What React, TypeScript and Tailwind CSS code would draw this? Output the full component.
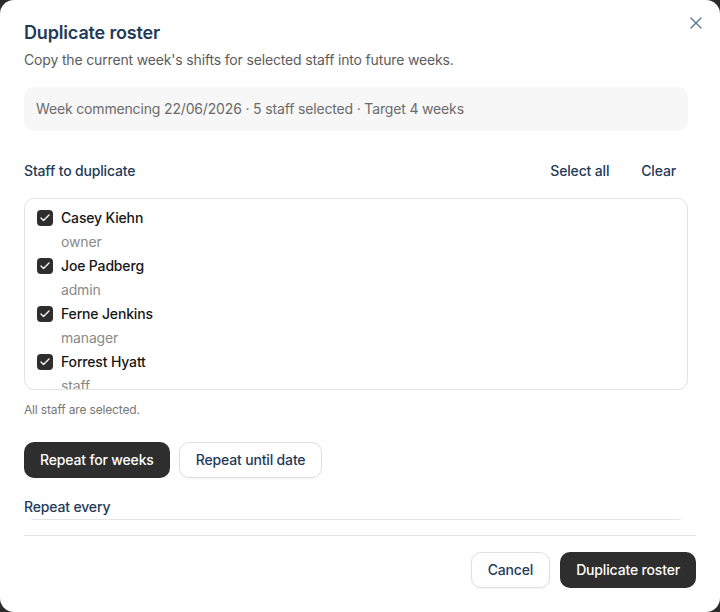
import React from "react";
import { X, Check } from "lucide-react";

const staff = [
  { name: "Casey Kiehn", role: "owner" },
  { name: "Joe Padberg", role: "admin" },
  { name: "Ferne Jenkins", role: "manager" },
  { name: "Forrest Hyatt", role: "staff" },
  { name: "Lela Schmitt", role: "staff" },
];

export default function App() {
  return (
    <div className="w-[720px] h-[612px] bg-[#2b2b2b] font-['Inter',sans-serif] tracking-[-0.01em]">
      <div className="relative flex flex-col h-full bg-white rounded-[14px] overflow-hidden">
        <button className="absolute right-[14px] top-[13px] text-[#5b7a96]">
          <X size={20} strokeWidth={1.6} />
        </button>

        <div className="flex-1 min-h-0 overflow-hidden pl-6 pr-8 pt-[19px]">
          <h2 className="text-lg leading-7 font-semibold text-[#1f3b58]">Duplicate roster</h2>
          <p className="mt-[3px] text-sm leading-5 text-[#5c5c5c]">
            Copy the current week's shifts for selected staff into future weeks.
          </p>

          <div className="mt-[17px] rounded-[10px] bg-[#f7f7f7] px-3 py-3 text-sm leading-5 text-[#6b6b6b]">
            Week commencing 22/06/2026 · 5 staff selected · Target 4 weeks
          </div>

          <div className="mt-[22px] flex items-center justify-between h-9">
            <span className="text-sm font-medium text-[#1f3b58]">Staff to duplicate</span>
            <div className="flex gap-2 text-sm font-medium text-[#1f3b58]">
              <button className="h-9 px-3">Select all</button>
              <button className="h-9 px-3">Clear</button>
            </div>
          </div>

          <div className="mt-[9px] h-[192px] overflow-hidden rounded-[10px] border border-[#e3e3e3] px-3 pt-[7px]">
            {staff.map((s) => (
              <div key={s.name} className="flex gap-2">
                <span className="mt-1 flex h-4 w-4 shrink-0 items-center justify-center rounded-[4px] bg-[#2e2e2e] text-white">
                  <Check size={12} strokeWidth={2.5} />
                </span>
                <div className="flex flex-col">
                  <span className="text-sm leading-6 font-medium text-[#171717]">{s.name}</span>
                  <span className="text-sm leading-6 text-[#8a8a8a]">{s.role}</span>
                </div>
              </div>
            ))}
          </div>

          <p className="mt-3 text-xs leading-4 text-[#777]">All staff are selected.</p>

          <div className="mt-6 flex gap-[9px]">
            <button className="h-9 rounded-[10px] bg-[#2e2e2e] px-4 text-sm font-medium text-white">
              Repeat for weeks
            </button>
            <button className="h-9 rounded-[10px] border border-[#e0e0e0] bg-white px-4 text-sm font-medium text-[#1f3b58] shadow-xs">
              Repeat until date
            </button>
          </div>

          <p className="mt-[19px] text-sm leading-5 font-medium text-[#1f3b58]">Repeat every</p>
          <div className="mt-0.5 h-9 rounded-[10px] border border-[#e3e3e3]" />
        </div>

        <div className="mx-6 mt-[15px] flex justify-end gap-2.5 border-t border-[#e3e3e3] pt-4 pb-6">
          <button className="h-9 rounded-[10px] border border-[#e0e0e0] bg-white px-4 text-sm font-medium text-[#1f3b58] shadow-xs">
            Cancel
          </button>
          <button className="h-9 rounded-[10px] bg-[#2e2e2e] px-4 text-sm font-medium text-white">
            Duplicate roster
          </button>
        </div>
      </div>
    </div>
  );
}
